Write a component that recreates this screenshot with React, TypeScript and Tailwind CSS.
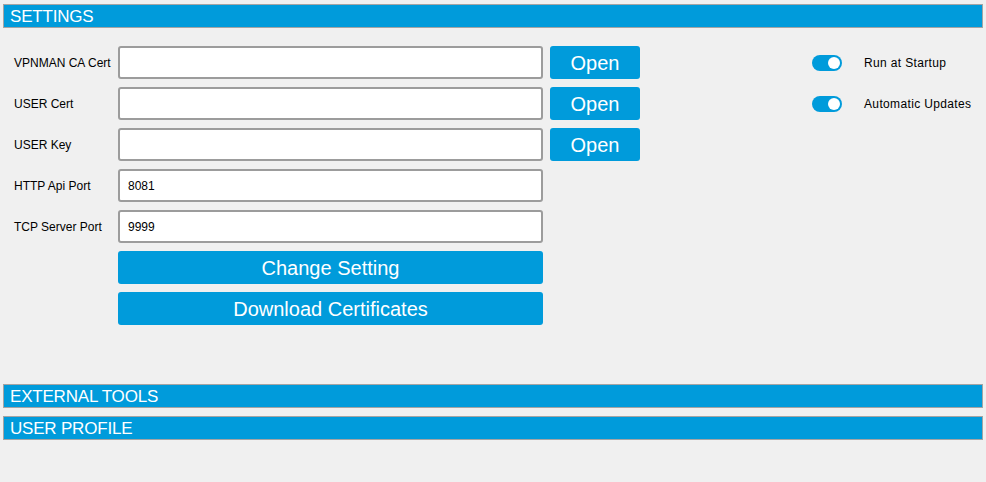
import React from "react";

const font = { fontFamily: '"Liberation Sans", Arial, sans-serif' };

function SectionBar({ title }: { title: string }) {
  return (
    <div className="h-[24px] border border-[#a4a4a4] bg-[#009bdb] flex items-center pl-[6px] pt-[1px] text-[17px] leading-none text-white tracking-[-0.2px]">
      {title}
    </div>
  );
}

function Toggle({ label }: { label: string }) {
  return (
    <div className="h-[33px] flex items-center gap-[22px] pt-[1px]">
      <div className="w-[30px] h-[16px] rounded-full bg-[#009bdb] flex items-center justify-end pr-[2px]">
        <div className="w-[12px] h-[12px] rounded-full bg-white" />
      </div>
      <span className="text-[12px] text-black tracking-[0.35px]">{label}</span>
    </div>
  );
}

export default function App() {
  const rows: { label: string; value: string; open: boolean }[] = [
    { label: "VPNMAN CA Cert", value: "", open: true },
    { label: "USER Cert", value: "", open: true },
    { label: "USER Key", value: "", open: true },
    { label: "HTTP Api Port", value: "8081", open: false },
    { label: "TCP Server Port", value: "9999", open: false },
  ];

  return (
    <div
      className="w-[986px] h-[482px] bg-[#f0f0f0] pt-[4px] px-[3px] flex flex-col overflow-hidden"
      style={font}
    >
      <SectionBar title="SETTINGS" />

      <div className="h-[356px] flex pt-[18px] pl-[11px]">
        <div className="grid grid-cols-[97px_425px_90px] gap-x-[7px] gap-y-[8px] content-start">
          {rows.map((r) => (
            <React.Fragment key={r.label}>
              <div className="h-[33px] flex items-center pt-[1px] text-[12px] text-black whitespace-nowrap">
                {r.label}
              </div>
              <div className="h-[33px] rounded-[3px] border-2 border-[#9c9c9c] bg-white flex items-center pl-[8px] pt-[1px] text-[12px] text-black">
                {r.value}
              </div>
              {r.open ? (
                <button className="h-[33px] rounded-[3px] bg-[#009bdb] text-white text-[20px] leading-none pt-[1px]">
                  Open
                </button>
              ) : (
                <div />
              )}
            </React.Fragment>
          ))}
          <div />
          <button className="h-[33px] rounded-[3px] bg-[#009bdb] text-white text-[20px] leading-none pt-[1px]">
            Change Setting
          </button>
          <div />
          <div />
          <button className="h-[33px] rounded-[3px] bg-[#009bdb] text-white text-[20px] leading-none pt-[1px]">
            Download Certificates
          </button>
          <div />
        </div>

        <div className="ml-[172px] flex flex-col gap-[8px]">
          <Toggle label="Run at Startup" />
          <Toggle label="Automatic Updates" />
        </div>
      </div>

      <div className="flex flex-col gap-[8px]">
        <SectionBar title="EXTERNAL TOOLS" />
        <SectionBar title="USER PROFILE" />
      </div>
    </div>
  );
}
